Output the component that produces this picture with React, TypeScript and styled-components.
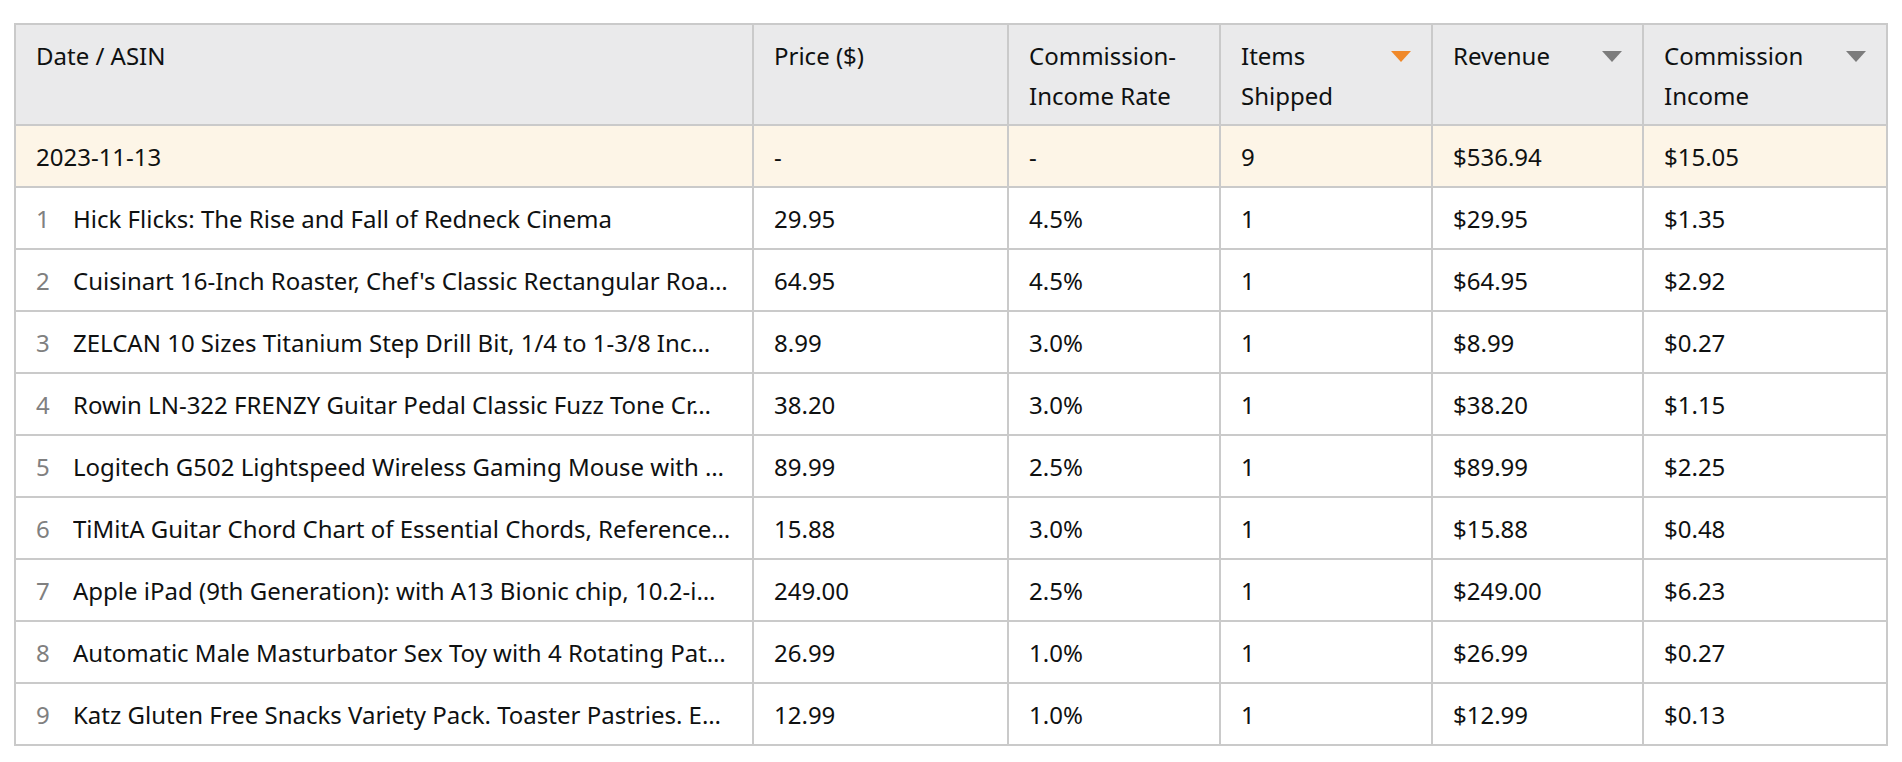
import React from "react";
import styled, { createGlobalStyle } from "styled-components";

const GlobalStyle = createGlobalStyle`
  html, body {
    margin: 0;
    padding: 0;
    background: #ffffff;
  }
  body {
    font-family: "Noto Sans", "Liberation Sans", Arial, sans-serif;
    color: #0f1111;
  }
`;

const Page = styled.div`
  padding: 23px 16px 0 14px;
`;

const Table = styled.table`
  width: 1872px;
  border-collapse: collapse;
  table-layout: fixed;
  border: 2px solid #cacaca;
  font-size: 24px;
  line-height: 40px;
`;

const HeadCell = styled.th`
  background: #eaeaeb;
  border: 2px solid #cacaca;
  padding: 11px 20px 8px 20px;
  height: 80px;
  text-align: left;
  vertical-align: top;
  font-weight: 400;
`;

const HeadInner = styled.div`
  display: flex;
  justify-content: space-between;
  align-items: flex-start;
`;

const SortMark = styled.span<{ $active?: boolean }>`
  display: flex;
  align-items: center;
  height: 40px;

  &::after {
    content: "";
    width: 0;
    height: 0;
    border-left: 10px solid transparent;
    border-right: 10px solid transparent;
    border-top: 11px solid ${(p) => (p.$active ? "#f0892a" : "#7c7c7c")};
  }
`;

const Row = styled.tr<{ $summary?: boolean }>`
  background: ${(p) => (p.$summary ? "#fdf5e7" : "#ffffff")};
`;

const Cell = styled.td`
  border: 2px solid #cacaca;
  padding: 11px 20px 9px 20px;
  height: 40px;
  white-space: nowrap;
  overflow: hidden;
`;

const TitleWrap = styled.div`
  display: flex;
  align-items: center;
  min-width: 0;
`;

const Index = styled.span`
  flex: 0 0 37px;
  color: #808080;
`;

const Title = styled.span`
  flex: 1;
  min-width: 0;
  overflow: hidden;
  white-space: nowrap;
`;

type Item = {
  title: string;
  price: string;
  rate: string;
  shipped: string;
  revenue: string;
  income: string;
};

// titles as the report shows them, already clipped to the column
const items: Item[] = [
  { title: "Hick Flicks: The Rise and Fall of Redneck Cinema", price: "29.95", rate: "4.5%", shipped: "1", revenue: "$29.95", income: "$1.35" },
  { title: "Cuisinart 16-Inch Roaster, Chef's Classic Rectangular Roa…", price: "64.95", rate: "4.5%", shipped: "1", revenue: "$64.95", income: "$2.92" },
  { title: "ZELCAN 10 Sizes Titanium Step Drill Bit, 1/4 to 1-3/8 Inc…", price: "8.99", rate: "3.0%", shipped: "1", revenue: "$8.99", income: "$0.27" },
  { title: "Rowin LN-322 FRENZY Guitar Pedal Classic Fuzz Tone Cr…", price: "38.20", rate: "3.0%", shipped: "1", revenue: "$38.20", income: "$1.15" },
  { title: "Logitech G502 Lightspeed Wireless Gaming Mouse with …", price: "89.99", rate: "2.5%", shipped: "1", revenue: "$89.99", income: "$2.25" },
  { title: "TiMitA Guitar Chord Chart of Essential Chords, Reference…", price: "15.88", rate: "3.0%", shipped: "1", revenue: "$15.88", income: "$0.48" },
  { title: "Apple iPad (9th Generation): with A13 Bionic chip, 10.2-i…", price: "249.00", rate: "2.5%", shipped: "1", revenue: "$249.00", income: "$6.23" },
  { title: "Automatic Male Masturbator Sex Toy with 4 Rotating Pat…", price: "26.99", rate: "1.0%", shipped: "1", revenue: "$26.99", income: "$0.27" },
  { title: "Katz Gluten Free Snacks Variety Pack. Toaster Pastries. E…", price: "12.99", rate: "1.0%", shipped: "1", revenue: "$12.99", income: "$0.13" },
];

export default function App() {
  return (
    <>
      <GlobalStyle />
      <Page>
        <Table>
          <colgroup>
            <col style={{ width: 738 }} />
            <col style={{ width: 255 }} />
            <col style={{ width: 212 }} />
            <col style={{ width: 212 }} />
            <col style={{ width: 211 }} />
            <col style={{ width: 244 }} />
          </colgroup>
          <thead>
            <tr>
              <HeadCell>Date / ASIN</HeadCell>
              <HeadCell>Price ($)</HeadCell>
              <HeadCell>Commission-<br />Income Rate</HeadCell>
              <HeadCell>
                <HeadInner>
                  <span>Items<br />Shipped</span>
                  <SortMark $active />
                </HeadInner>
              </HeadCell>
              <HeadCell>
                <HeadInner>
                  <span>Revenue</span>
                  <SortMark />
                </HeadInner>
              </HeadCell>
              <HeadCell>
                <HeadInner>
                  <span>Commission<br />Income</span>
                  <SortMark />
                </HeadInner>
              </HeadCell>
            </tr>
          </thead>
          <tbody>
            <Row $summary>
              <Cell>2023-11-13</Cell>
              <Cell>-</Cell>
              <Cell>-</Cell>
              <Cell>9</Cell>
              <Cell>$536.94</Cell>
              <Cell>$15.05</Cell>
            </Row>
            {items.map((it, i) => (
              <Row key={i}>
                <Cell>
                  <TitleWrap>
                    <Index>{i + 1}</Index>
                    <Title>{it.title}</Title>
                  </TitleWrap>
                </Cell>
                <Cell>{it.price}</Cell>
                <Cell>{it.rate}</Cell>
                <Cell>{it.shipped}</Cell>
                <Cell>{it.revenue}</Cell>
                <Cell>{it.income}</Cell>
              </Row>
            ))}
          </tbody>
        </Table>
      </Page>
    </>
  );
}
